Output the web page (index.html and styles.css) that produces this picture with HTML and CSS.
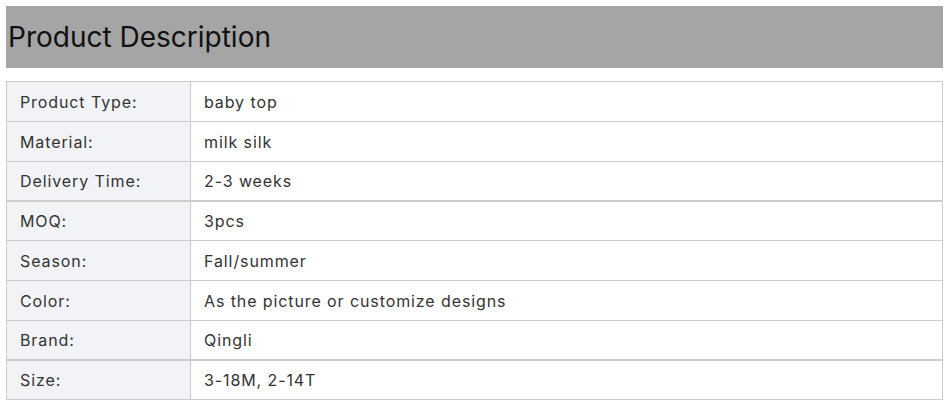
FILE: index.html
```html
<!DOCTYPE html>
<html>
<head>
<meta charset="utf-8">
<link rel="stylesheet" href="styles.css">
</head>
<body>
<div class="page">
  <h2 class="title">Product Description</h2>
  <table class="spec">
    <tbody>
      <tr><td class="label">Product Type:</td><td class="value">baby top</td></tr>
      <tr><td class="label">Material:</td><td class="value">milk silk</td></tr>
      <tr class="short"><td class="label">Delivery Time:</td><td class="value">2-3 weeks</td></tr>
      <tr class="thick"><td class="label">MOQ:</td><td class="value">3pcs</td></tr>
      <tr><td class="label">Season:</td><td class="value">Fall/summer</td></tr>
      <tr><td class="label">Color:</td><td class="value">As the picture or customize designs</td></tr>
      <tr class="short"><td class="label">Brand:</td><td class="value">Qingli</td></tr>
      <tr class="thick"><td class="label">Size:</td><td class="value">3-18M, 2-14T</td></tr>
    </tbody>
  </table>
</div>
</body>
</html>
```
FILE: styles.css
```css
html, body {
  margin: 0;
  padding: 0;
  background: #ffffff;
}
body {
  font-family: Inter, "Noto Sans", sans-serif;
  color: #333333;
}
.page {
  padding: 6px 4px 0 6px;
}
.title {
  margin: 0;
  height: 62px;
  background: #a5a5a5;
  color: #111111;
  font-size: 28px;
  font-weight: 400;
  line-height: 62px;
  padding-left: 2px;
}
.spec {
  margin-top: 13px;
  width: 937px;
  border-collapse: collapse;
  font-size: 16px;
  letter-spacing: 0.9px;
}
.spec td {
  border: 1px solid #cccccc;
  height: 40px;
  padding: 1px 13px 0 13px;
  box-sizing: border-box;
}
.spec tr.short td {
  height: 39px;
}
.spec tr.thick td {
  border-top: 2px solid #cccccc;
}
.label {
  width: 184px;
  background: #f2f3f7;
}
.value {
  background: #ffffff;
}
```
